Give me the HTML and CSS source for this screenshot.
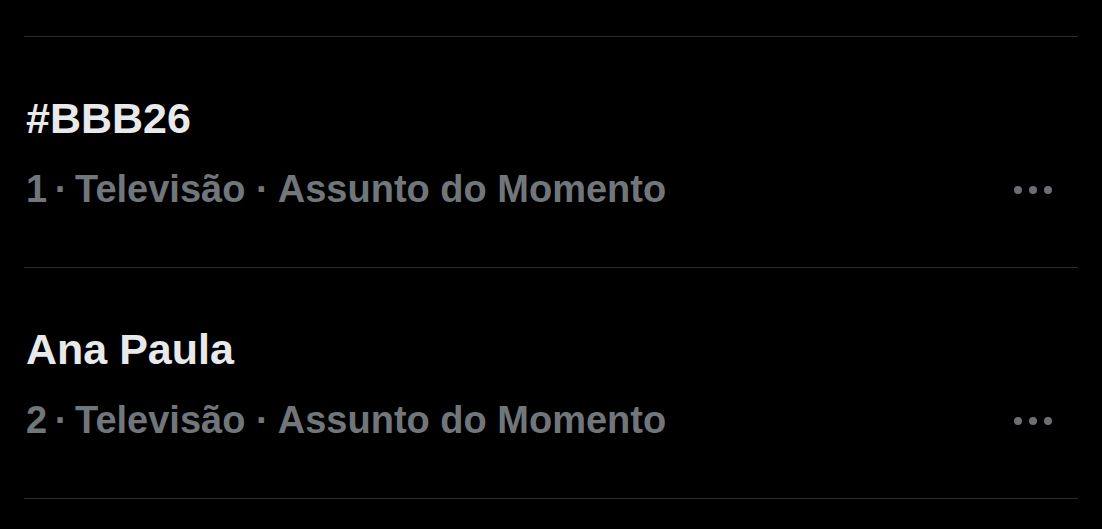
FILE: index.html
```html
<!DOCTYPE html>
<html lang="pt-BR">
<head>
<meta charset="utf-8">
<title>Assuntos do Momento</title>
<link rel="stylesheet" href="styles.css">
</head>
<body>
<main class="trends">
  <div class="trend">
    <div class="trend-title">#BBB26</div>
    <div class="trend-meta">
      <span class="trend-context">1&thinsp;·&thinsp;Televisão · Assunto do Momento</span>
      <svg class="more" width="38" height="8" viewBox="0 0 38 8" aria-label="Mais">
        <circle cx="4" cy="4" r="4"/>
        <circle cx="19" cy="4" r="4"/>
        <circle cx="34" cy="4" r="4"/>
      </svg>
    </div>
  </div>
  <div class="trend">
    <div class="trend-title">Ana Paula</div>
    <div class="trend-meta">
      <span class="trend-context">2&thinsp;·&thinsp;Televisão · Assunto do Momento</span>
      <svg class="more" width="38" height="8" viewBox="0 0 38 8" aria-label="Mais">
        <circle cx="4" cy="4" r="4"/>
        <circle cx="19" cy="4" r="4"/>
        <circle cx="34" cy="4" r="4"/>
      </svg>
    </div>
  </div>
</main>
</body>
</html>
```
FILE: styles.css
```css
html, body {
  margin: 0;
  background: #000;
  height: 100%;
}
body {
  font-family: "Liberation Sans", Arial, sans-serif;
  overflow: hidden;
}
.trends {
  margin: 36px 24px 0 24px;
  border-top: 1px solid #2a2c2f;
}
.trend {
  padding: 56px 0 56px 2px;
  border-bottom: 1px solid #2a2c2f;
  display: flex;
  flex-direction: column;
  gap: 24px;
}
.trend-title {
  color: #e7e9ea;
  font-size: 43px;
  line-height: 50px;
  font-weight: 700;
}
.trend-meta {
  display: flex;
  align-items: center;
  justify-content: space-between;
  padding-right: 26px;
}
.trend-context {
  color: #71767b;
  font-size: 38px;
  line-height: 44px;
  font-weight: 700;
}
.more {
  fill: #6b6e72;
  margin-top: 2px;
}
```
